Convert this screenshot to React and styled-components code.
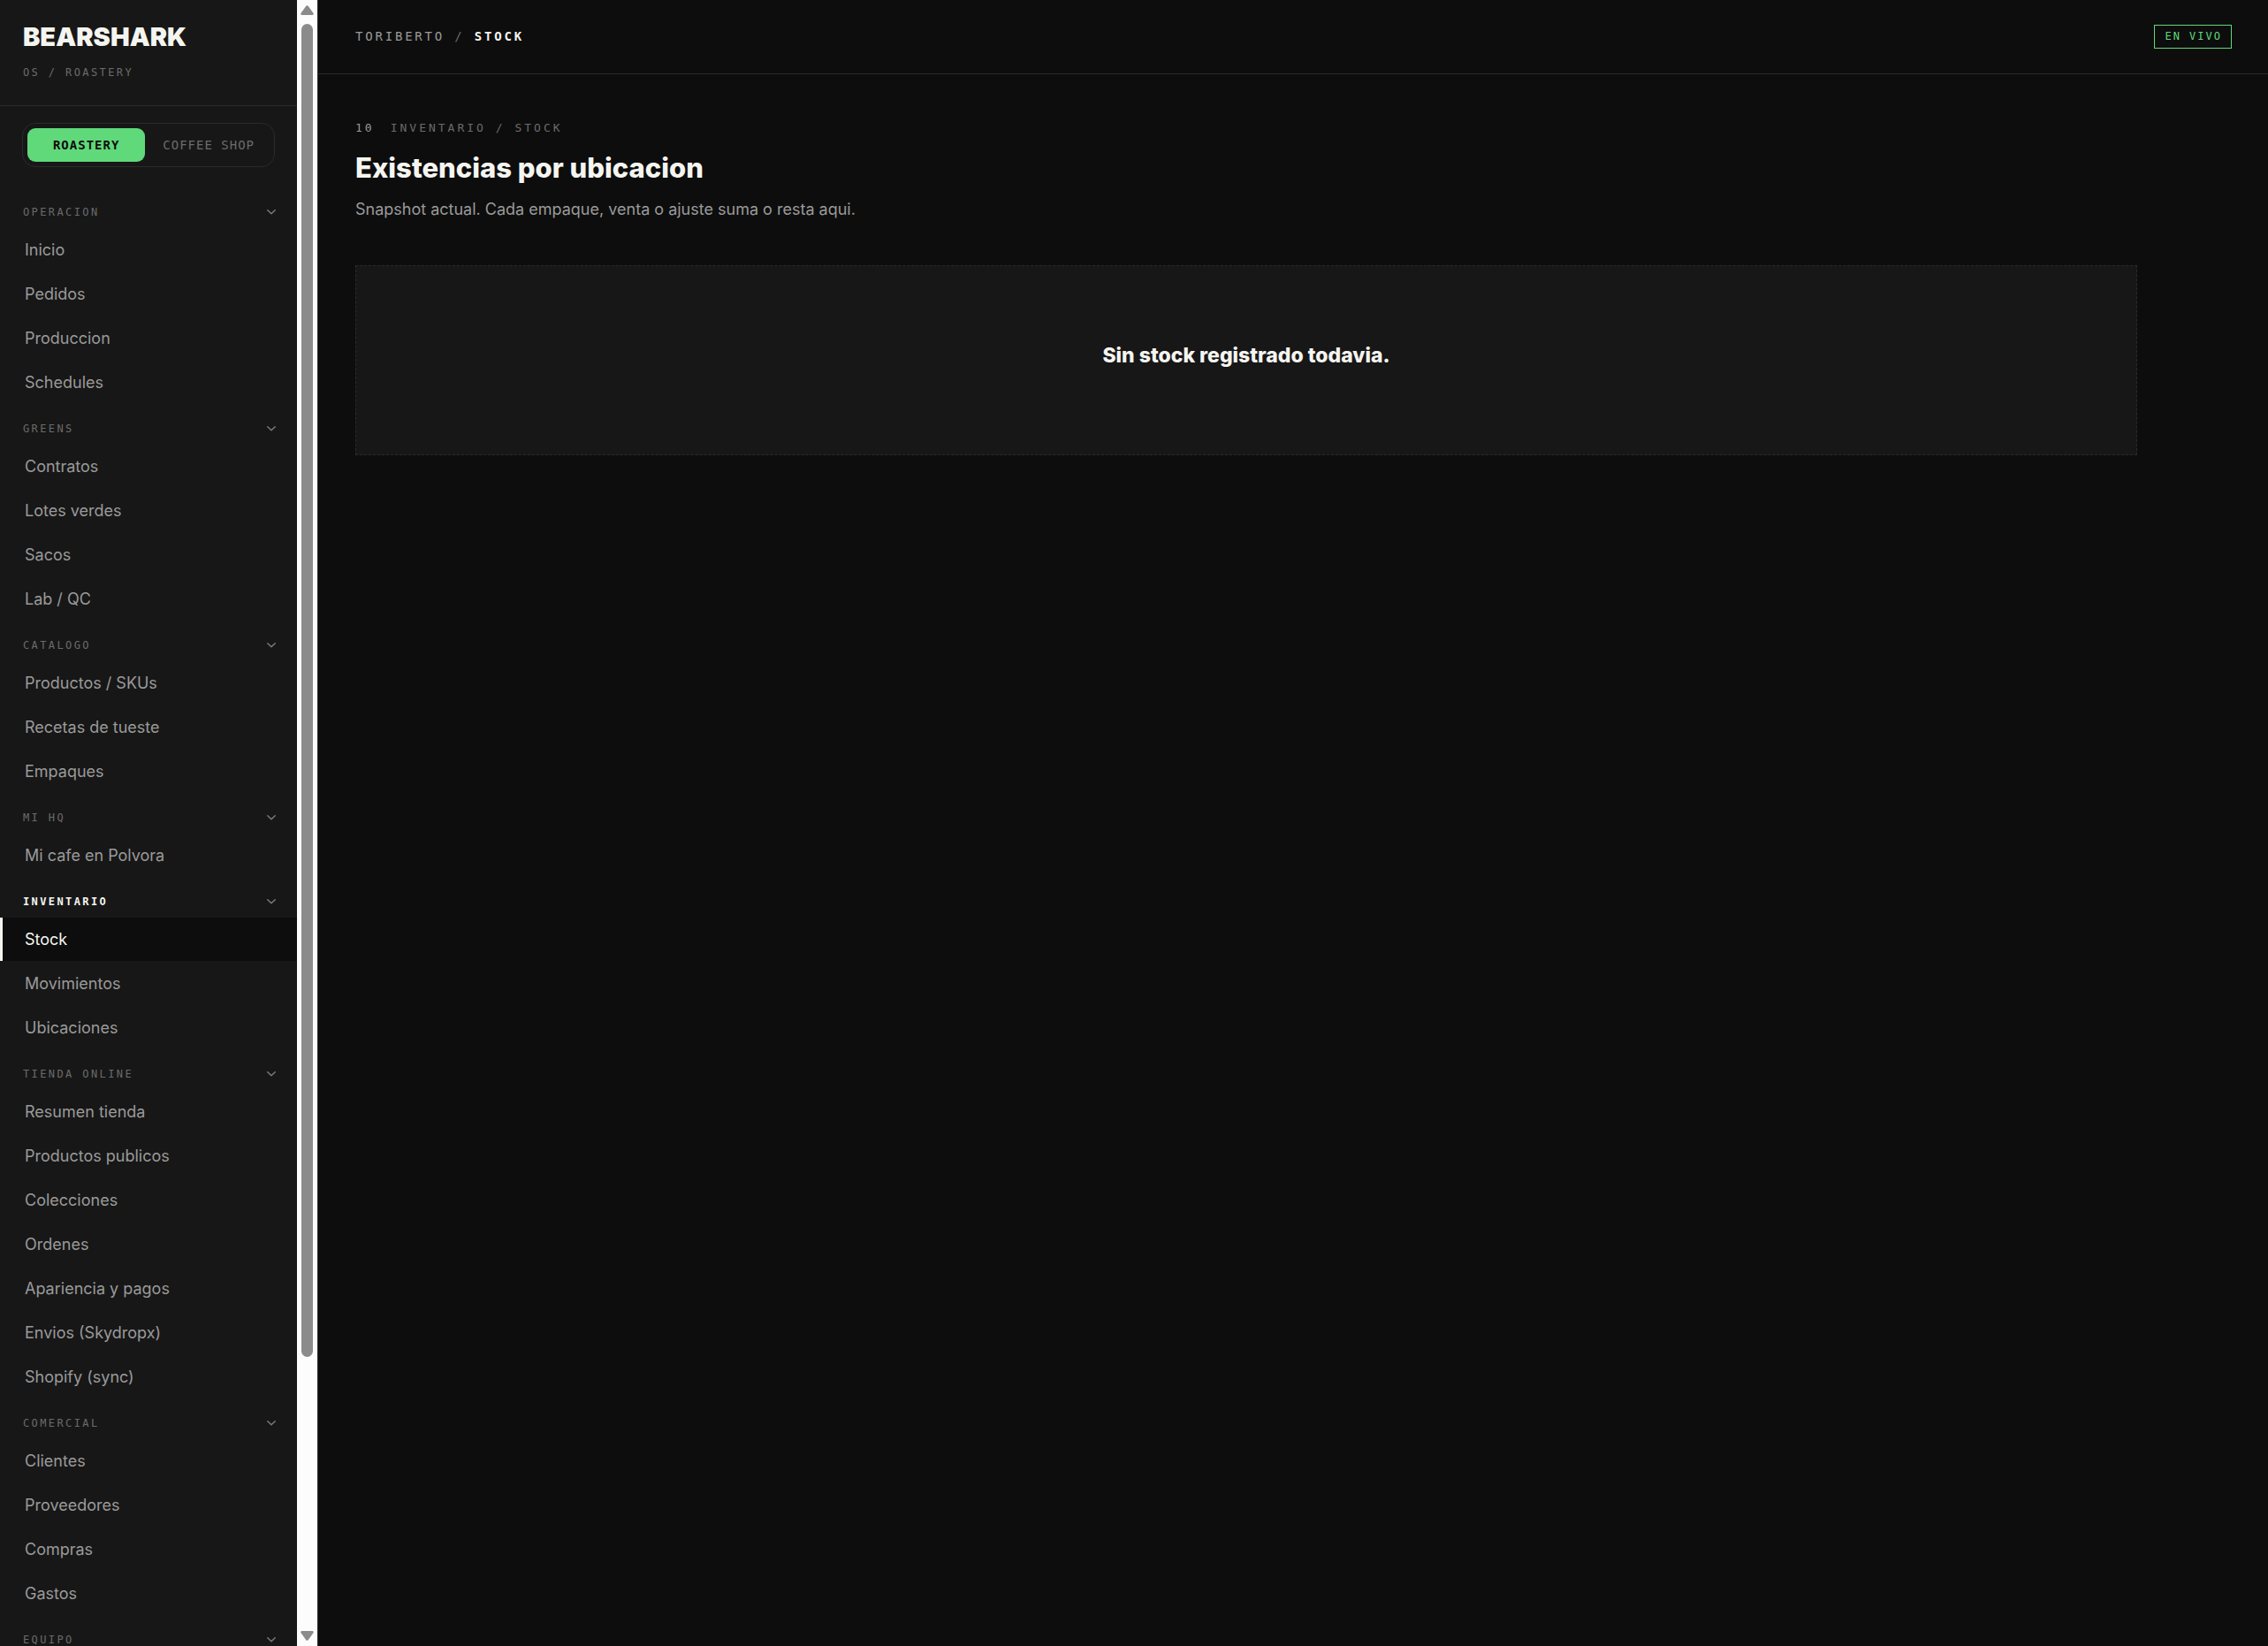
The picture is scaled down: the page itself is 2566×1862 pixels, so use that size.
import React, { useState } from "react";
import styled, { createGlobalStyle, css } from "styled-components";

const GlobalStyle = createGlobalStyle`
  * {
    box-sizing: border-box;
    margin: 0;
    padding: 0;
  }
  body {
    background: #0d0d0d;
    color: #f5f5f0;
    font-family: Inter, sans-serif;
    font-size: 18px;
  }
  button {
    border: none;
    background: none;
    color: inherit;
    cursor: pointer;
  }
  a {
    color: inherit;
    text-decoration: none;
  }
  ul {
    list-style: none;
  }
`;

const mono = css`
  font-family: "DejaVu Sans Mono", monospace;
  text-transform: uppercase;
`;

const Layout = styled.div`
  display: flex;
  height: 100vh;
  overflow: hidden;
`;

const Sidebar = styled.aside`
  display: flex;
  flex: 0 0 360px;
  background: #171717;
  border-right: 1px solid #2a2a2a;
`;

const SidebarScroll = styled.div`
  flex: 1;
  overflow-y: auto;
  scrollbar-width: none;
`;

const Brand = styled.div`
  padding: 25px 26px 28px;
  border-bottom: 1px solid #2a2a2a;
`;

const Logo = styled.h1`
  font-size: 29px;
  font-weight: 900;
  line-height: 34px;
`;

const BrandSub = styled.p`
  ${mono}
  margin-top: 14px;
  color: #6b6b6b;
  font-size: 12px;
  letter-spacing: 0.2em;
  line-height: 18px;
`;

const ModeSwitch = styled.div`
  display: flex;
  gap: 3px;
  margin: 19px 25px 24px;
  padding: 5px;
  border: 1px solid #2a2a2a;
  border-radius: 15px;
`;

const ModeButton = styled.button`
  ${mono}
  flex: ${({ $active }) => ($active ? "1 1 auto" : "0 0 auto")};
  height: 38px;
  padding: 0 17px;
  border-radius: 9px;
  background: ${({ $active }) => ($active ? "#5fd97a" : "transparent")};
  color: ${({ $active }) => ($active ? "#0d0d0d" : "#6b6b6b")};
  font-size: 14px;
  font-weight: ${({ $active }) => ($active ? 700 : 400)};
  letter-spacing: 1px;
`;

const GroupHeader = styled.button`
  ${mono}
  display: flex;
  align-items: center;
  justify-content: space-between;
  width: 100%;
  padding: 20px 24px 11px 26px;
  color: ${({ $active }) => ($active ? "#f5f5f0" : "#6b6b6b")};
  font-size: 12px;
  font-weight: ${({ $active }) => ($active ? 700 : 400)};
  letter-spacing: 0.2em;
  line-height: 14px;
`;

const Chevron = styled.svg`
  width: 10px;
  height: 6px;
  color: #7a7a7a;
`;

const NavLink = styled.a`
  display: block;
  margin-bottom: 1px;
  padding: 11px 25px;
  border-left: 3px solid ${({ $active }) => ($active ? "#f5f5f0" : "transparent")};
  background: ${({ $active }) => ($active ? "#0d0d0d" : "transparent")};
  color: ${({ $active }) => ($active ? "#f5f5f0" : "#9a9a9a")};
  line-height: 27px;
`;

const Scrollbar = styled.div`
  display: flex;
  flex: 0 0 23px;
  flex-direction: column;
  align-items: center;
  padding: 6px 0;
  background: #fcfcfc;
`;

const Arrow = styled.svg`
  flex: none;
  width: 15px;
  height: 11px;
  fill: #8b8b8b;
`;

const Track = styled.div`
  flex: 1;
  width: 13px;
  margin: 10px 0;
`;

const Thumb = styled.div`
  height: 83.4%;
  border-radius: 7px;
  background: #8b8b8b;
`;

const Main = styled.main`
  flex: 1;
  min-width: 0;
`;

const Topbar = styled.header`
  display: flex;
  align-items: center;
  justify-content: space-between;
  height: 84px;
  padding: 0 41px 0 42px;
  border-bottom: 1px solid #2a2a2a;
`;

const Breadcrumb = styled.nav`
  ${mono}
  color: #9a9a9a;
  font-size: 14px;
  letter-spacing: 0.2em;
  line-height: 21px;

  span {
    color: #6b6b6b;
  }
  strong {
    color: #f5f5f0;
  }
`;

const LiveBadge = styled.span`
  ${mono}
  padding: 4px 10px 4px 11px;
  border: 1px solid #5fd97a;
  color: #5fd97a;
  font-size: 12px;
  letter-spacing: 2px;
  line-height: 17px;
`;

const Content = styled.section`
  max-width: 2100px;
  padding: 51px 42px;
`;

const Eyebrow = styled.p`
  ${mono}
  display: flex;
  gap: 18px;
  color: #6b6b6b;
  font-size: 13px;
  letter-spacing: 3px;
  line-height: 20px;

  span {
    color: #9a9a9a;
  }
`;

const Title = styled.h2`
  margin-top: 14px;
  font-size: 31px;
  font-weight: 800;
  line-height: 42px;
`;

const Subtitle = styled.p`
  margin-top: 12px;
  color: #9a9a9a;
  line-height: 27px;
`;

const EmptyState = styled.div`
  margin-top: 50px;
  padding: 85px 42px;
  border: 1px dashed #2a2a2a;
  background: #171717;
  text-align: center;
`;

const EmptyTitle = styled.h3`
  margin-bottom: 11px;
  font-size: 23px;
  font-weight: 800;
  line-height: 32px;
`;

const groups = [
  { title: "Operacion", items: ["Inicio", "Pedidos", "Produccion", "Schedules"] },
  { title: "Greens", items: ["Contratos", "Lotes verdes", "Sacos", "Lab / QC"] },
  { title: "Catalogo", items: ["Productos / SKUs", "Recetas de tueste", "Empaques"] },
  { title: "Mi HQ", items: ["Mi cafe en Polvora"] },
  { title: "Inventario", items: ["Stock", "Movimientos", "Ubicaciones"] },
  {
    title: "Tienda online",
    items: [
      "Resumen tienda",
      "Productos publicos",
      "Colecciones",
      "Ordenes",
      "Apariencia y pagos",
      "Envios (Skydropx)",
      "Shopify (sync)",
    ],
  },
  { title: "Comercial", items: ["Clientes", "Proveedores", "Compras", "Gastos"] },
  { title: "Equipo", items: [] },
];

function NavGroup({ title, items, current }) {
  const [open, setOpen] = useState(true);
  return (
    <div>
      <GroupHeader
        $active={items.includes(current)}
        aria-expanded={open}
        onClick={() => setOpen(!open)}
      >
        {title}
        <Chevron
          viewBox="0 0 10 6"
          fill="none"
          stroke="currentColor"
          strokeWidth="1.5"
          strokeLinecap="round"
          strokeLinejoin="round"
        >
          <path d="M0.8 0.8 L5 4.8 L9.2 0.8" />
        </Chevron>
      </GroupHeader>
      {open && (
        <ul>
          {items.map((item) => (
            <li key={item}>
              <NavLink href="#" $active={item === current}>
                {item}
              </NavLink>
            </li>
          ))}
        </ul>
      )}
    </div>
  );
}

export default function App() {
  const [mode, setMode] = useState("Roastery");
  return (
    <>
      <GlobalStyle />
      <Layout>
        <Sidebar>
          <SidebarScroll>
            <Brand>
              <Logo>BEARSHARK</Logo>
              <BrandSub>OS / Roastery</BrandSub>
            </Brand>
            <ModeSwitch>
              {["Roastery", "Coffee shop"].map((name) => (
                <ModeButton key={name} $active={mode === name} onClick={() => setMode(name)}>
                  {name}
                </ModeButton>
              ))}
            </ModeSwitch>
            <nav>
              {groups.map((group) => (
                <NavGroup key={group.title} {...group} current="Stock" />
              ))}
            </nav>
          </SidebarScroll>
          <Scrollbar aria-hidden="true">
            <Arrow viewBox="0 0 15 11">
              <path d="M6.3 0.8 Q7.5 -0.5 8.7 0.8 L14.6 9 Q15 11 13.5 11 H1.5 Q0 11 0.4 9 Z" />
            </Arrow>
            <Track>
              <Thumb />
            </Track>
            <Arrow viewBox="0 0 15 11">
              <path d="M6.3 10.2 Q7.5 11.5 8.7 10.2 L14.6 2 Q15 0 13.5 0 H1.5 Q0 0 0.4 2 Z" />
            </Arrow>
          </Scrollbar>
        </Sidebar>
        <Main>
          <Topbar>
            <Breadcrumb>
              Toriberto <span>/</span> <strong>Stock</strong>
            </Breadcrumb>
            <LiveBadge>En vivo</LiveBadge>
          </Topbar>
          <Content>
            <Eyebrow>
              <span>10</span>Inventario / Stock
            </Eyebrow>
            <Title>Existencias por ubicacion</Title>
            <Subtitle>
              Snapshot actual. Cada empaque, venta o ajuste suma o resta aqui.
            </Subtitle>
            <EmptyState>
              <EmptyTitle>Sin stock registrado todavia.</EmptyTitle>
            </EmptyState>
          </Content>
        </Main>
      </Layout>
    </>
  );
}
